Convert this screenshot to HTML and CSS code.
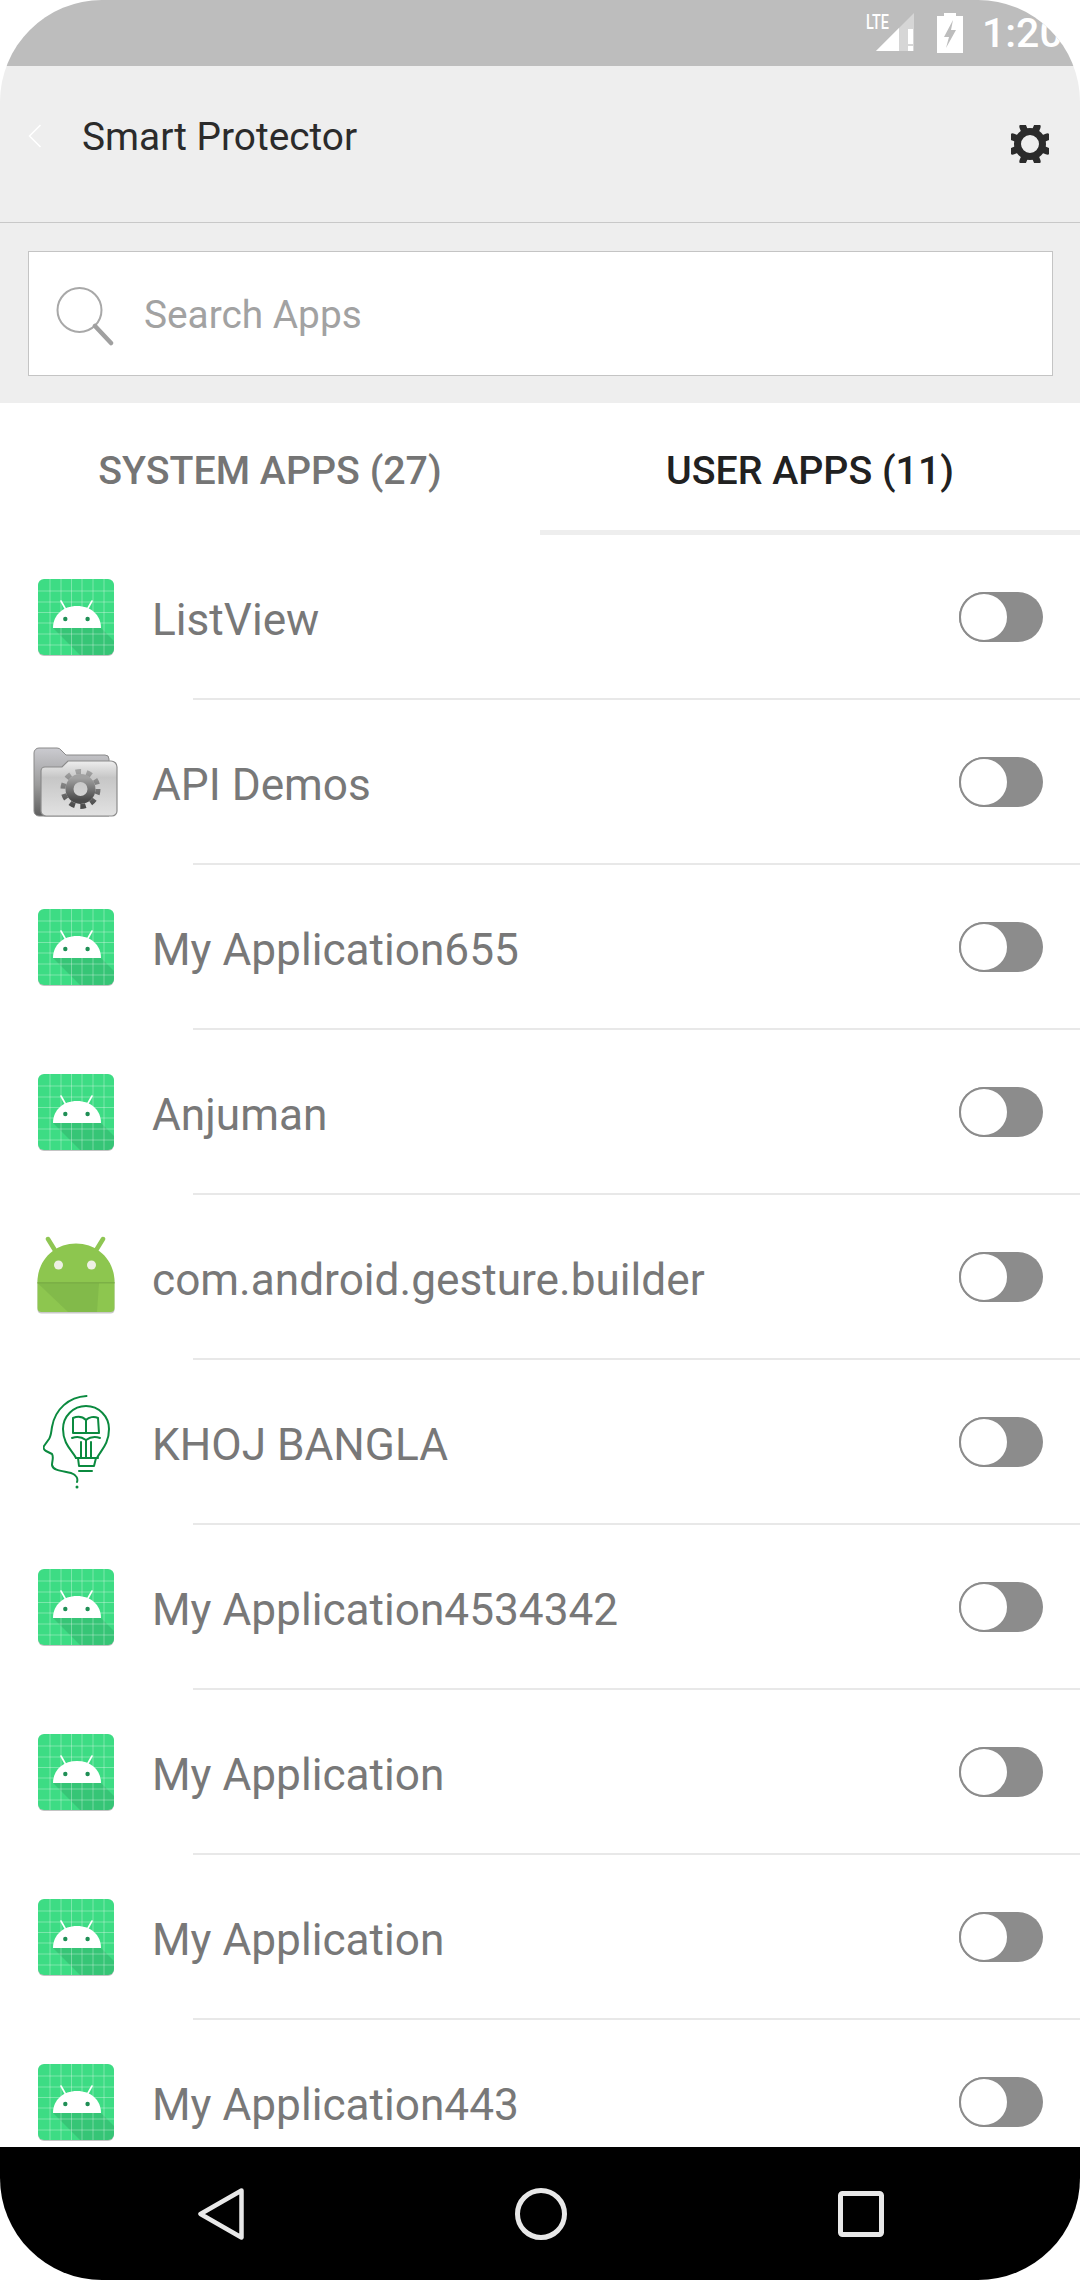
FILE: index.html
```html
<!DOCTYPE html>
<html lang="en">
<head>
<meta charset="utf-8">
<title>Smart Protector</title>
<link rel="stylesheet" href="styles.css">
</head>
<body>
<svg class="defs" width="0" height="0" aria-hidden="true">
  <defs>
    <linearGradient id="fold-front" x1="0" y1="0" x2="0" y2="1">
      <stop offset="0" stop-color="#eeeeee"/><stop offset=".3" stop-color="#c6c6c6"/><stop offset=".6" stop-color="#d2d2d2"/><stop offset="1" stop-color="#e2e2e2"/>
    </linearGradient>
    <linearGradient id="fold-back" x1="0" y1="0" x2="0" y2="1">
      <stop offset="0" stop-color="#cbcbd0"/><stop offset=".55" stop-color="#9a9a9a"/><stop offset="1" stop-color="#5f5f5f"/>
    </linearGradient>
    <linearGradient id="fold-gear" x1="0" y1="0" x2="0" y2="1">
      <stop offset="0" stop-color="#a2a2a2"/><stop offset="1" stop-color="#4a4a4a"/>
    </linearGradient>
    <symbol id="ic-app" viewBox="0 0 78 78">
      <rect x="0" y="1" width="76" height="76" rx="6" fill="#c4c4c4"/>
      <rect width="76" height="76" rx="6" fill="#3ddc84"/>
      <path d="M15 49 42 76H70a6 6 0 0 0 6-6V62L63 49Z" fill="#1e6b40" opacity=".2"/>
      <path d="M12 0V76M23 0V76M33.500 0V76M44 0V76M55 0V76M66 0V76M0 12H76M0 23H76M0 33.500H76M0 44H76M0 55H76M0 66H76" stroke="#fff" stroke-opacity=".32" stroke-width="1" fill="none"/>
      <path d="M15 49C15 36 25 27 39 27S63 36 63 49Z" fill="#fff"/>
      <path d="M23 22 27.500 30M54 22 49.500 30" stroke="#fff" stroke-width="1.600" stroke-linecap="round"/>
      <circle cx="27.300" cy="40" r="2.200" fill="#1f8f55"/><circle cx="49.600" cy="40" r="2.200" fill="#1f8f55"/>
    </symbol>
    <symbol id="ic-folder" viewBox="0 0 86 72">
      <path d="M1 6a5 5 0 0 1 5-5H24a5 5 0 0 1 4 2L33 8H72a4 4 0 0 1 4 4V69H6a5 5 0 0 1-5-5Z" fill="url(#fold-back)" stroke="#8a8a8a"/>
      <path d="M8 24a4 4 0 0 1 4-4H29L35 14H78a6 6 0 0 1 6 6V64a5 5 0 0 1-5 5H13a5 5 0 0 1-5-5Z" fill="url(#fold-front)" stroke="#8c8c8c" stroke-width="1.200"/>
      <circle cx="47.500" cy="42" r="11" fill="none" stroke="url(#fold-gear)" stroke-width="8"/>
      <circle cx="47.500" cy="42" r="17.500" fill="none" stroke="url(#fold-gear)" stroke-width="5" stroke-dasharray="5.500 5.500"/>
    </symbol>
    <symbol id="ic-robot" viewBox="0 0 78 80">
      <path d="M11 3 19 16M66 3 58 16" stroke="#8fc653" stroke-width="4.500" stroke-linecap="round"/>
      <path d="M1 46V72a4 4 0 0 0 4 4H74a4 4 0 0 0 4-4V46C78 24 61 8 39.500 8S1 24 1 46Z" fill="#c8c8c8" transform="translate(-.5 1.500)"/>
      <path d="M.5 46V72a4 4 0 0 0 4 4H73.500a4 4 0 0 0 4-4V46C77.500 24 60.500 7.500 39 7.500S.5 24 .5 46Z" fill="#8dc64f"/>
      <path d="M.5 46H77.500V47.500H.5Z" fill="#7cb046"/>
      <path d="M.5 47 31 76H60L62 47Z" fill="#74a844" opacity=".4"/>
      <circle cx="21.500" cy="29" r="4.500" fill="#eef0e4"/><circle cx="54.500" cy="29" r="4.500" fill="#eef0e4"/>
    </symbol>
    <symbol id="ic-khoj" viewBox="0 0 68 96">
      <g fill="none" stroke="#0b8a3f" stroke-width="2" stroke-linecap="round" stroke-linejoin="round">
        <path d="M43.500 1C26 2 12 14 9 32 8 38 8 41 6 44L1 51C0 53 1 55 3 56L9 59C11 62 9 66 9 70 10 76 20 76 28 78 34 80 35 84 34 87"/>
        <path d="M33 63C30 56 20 50 20 34A23 23 0 1 1 66 34C66 50 57 56 54 63"/>
        <path d="M33 63H55M35 63 36 71H51L53 63M36 76H49"/>
        <path d="M38 47V63M48 47V63M43 45V63"/>
        <path d="M30 23C35 21 40 22 43 25 46 22 51 21 55 23L56 38H30ZM43 25V38"/>
        <path d="M29 43C34 41 39 42 43 45 47 42 52 41 57 43"/>
      </g>
      <circle cx="34" cy="92" r="1.500" fill="#0b8a3f"/>
    </symbol>
    <symbol id="ic-gear" viewBox="0 0 38 38">
      <g fill="#2b2b2b">
        <path d="M15.500 .5a3.500 3.500 0 0 1 7 0V8h-7Z" transform="rotate(22.500 19 19)"/>
        <path d="M15.500 .5a3.500 3.500 0 0 1 7 0V8h-7Z" transform="rotate(67.500 19 19)"/>
        <path d="M15.500 .5a3.500 3.500 0 0 1 7 0V8h-7Z" transform="rotate(112.500 19 19)"/>
        <path d="M15.500 .5a3.500 3.500 0 0 1 7 0V8h-7Z" transform="rotate(157.500 19 19)"/>
        <path d="M15.500 .5a3.500 3.500 0 0 1 7 0V8h-7Z" transform="rotate(202.500 19 19)"/>
        <path d="M15.500 .5a3.500 3.500 0 0 1 7 0V8h-7Z" transform="rotate(247.500 19 19)"/>
        <path d="M15.500 .5a3.500 3.500 0 0 1 7 0V8h-7Z" transform="rotate(292.500 19 19)"/>
        <path d="M15.500 .5a3.500 3.500 0 0 1 7 0V8h-7Z" transform="rotate(337.500 19 19)"/>
      </g>
      <circle cx="19" cy="19" r="12.500" fill="none" stroke="#2b2b2b" stroke-width="7"/>
    </symbol>
  </defs>
</svg>

<div class="screen">
  <header class="status">
    <span class="lte">LTE</span>
    <svg class="signal" width="42" height="40" viewBox="0 0 42 40"><path d="M0 38 38 0V38Z" fill="#d6d6d6"/><path d="M0 38 23 15V38Z" fill="#fff"/><path d="M32 16h5V31H32ZM32 33h5v5H32Z" fill="#fff"/></svg>
    <svg class="battery" width="26" height="40" viewBox="0 0 26 40"><path d="M7 0H19V3H26V40H0V3H7Z" fill="#fff"/><path d="M16 7 7 24H12L9 35 19 17H14Z" fill="#bdbdbd"/></svg>
    <span class="time">1:20</span>
  </header>

  <div class="appbar">
    <svg class="back" width="14" height="24" viewBox="0 0 14 24"><path d="M12.500 1 1.500 12 12.500 23" fill="none" stroke="#fff" stroke-width="1.500"/></svg>
    <h1 class="title">Smart Protector</h1>
    <svg class="gear" width="38" height="38"><use href="#ic-gear"/></svg>
  </div>

  <div class="searchwrap">
    <div class="search">
      <svg class="search-ic" width="58" height="60" viewBox="0 0 58 60"><circle cx="23.500" cy="23" r="22" fill="none" stroke="#a8a8a8" stroke-width="2"/><path d="M39 39 55 56" stroke="#a0a0a0" stroke-width="4.500" stroke-linecap="round"/></svg>
      <span class="placeholder">Search Apps</span>
    </div>
  </div>

  <nav class="tabs">
    <div class="tab">SYSTEM APPS (27)</div>
    <div class="tab tab-on">USER APPS (11)</div>
  </nav>

  <main class="list">
    <div class="row"><div class="row-main"><span class="icon"><svg width="78" height="78"><use href="#ic-app"/></svg></span><span class="name">ListView</span><span class="toggle"></span></div><div class="rule"></div></div>
    <div class="row"><div class="row-main"><span class="icon"><svg class="folder" width="86" height="72"><use href="#ic-folder"/></svg></span><span class="name">API Demos</span><span class="toggle"></span></div><div class="rule"></div></div>
    <div class="row"><div class="row-main"><span class="icon"><svg width="78" height="78"><use href="#ic-app"/></svg></span><span class="name">My Application655</span><span class="toggle"></span></div><div class="rule"></div></div>
    <div class="row"><div class="row-main"><span class="icon"><svg width="78" height="78"><use href="#ic-app"/></svg></span><span class="name">Anjuman</span><span class="toggle"></span></div><div class="rule"></div></div>
    <div class="row"><div class="row-main"><span class="icon"><svg class="robot" width="78" height="80"><use href="#ic-robot"/></svg></span><span class="name">com.android.gesture.builder</span><span class="toggle"></span></div><div class="rule"></div></div>
    <div class="row"><div class="row-main"><span class="icon"><svg class="khoj" width="68" height="96"><use href="#ic-khoj"/></svg></span><span class="name">KHOJ BANGLA</span><span class="toggle"></span></div><div class="rule"></div></div>
    <div class="row"><div class="row-main"><span class="icon"><svg width="78" height="78"><use href="#ic-app"/></svg></span><span class="name">My Application4534342</span><span class="toggle"></span></div><div class="rule"></div></div>
    <div class="row"><div class="row-main"><span class="icon"><svg width="78" height="78"><use href="#ic-app"/></svg></span><span class="name">My Application</span><span class="toggle"></span></div><div class="rule"></div></div>
    <div class="row"><div class="row-main"><span class="icon"><svg width="78" height="78"><use href="#ic-app"/></svg></span><span class="name">My Application</span><span class="toggle"></span></div><div class="rule"></div></div>
    <div class="row"><div class="row-main"><span class="icon"><svg width="78" height="78"><use href="#ic-app"/></svg></span><span class="name">My Application443</span><span class="toggle"></span></div><div class="rule"></div></div>
  </main>

  <footer class="navbar">
    <svg width="46" height="52" viewBox="0 0 46 52"><path d="M43.500 2.500 2.500 26 43.500 49.500Z" fill="none" stroke="#e8e8e8" stroke-width="4.500" stroke-linejoin="round"/></svg>
    <svg width="52" height="52" viewBox="0 0 52 52"><circle cx="26" cy="26" r="23.500" fill="none" stroke="#e8e8e8" stroke-width="5"/></svg>
    <svg width="46" height="46" viewBox="0 0 46 46"><rect x="2.500" y="2.500" width="41" height="41" rx="2" fill="none" stroke="#e8e8e8" stroke-width="5"/></svg>
  </footer>
</div>
</body>
</html>
```
FILE: styles.css
```css
html, body {
  margin: 0;
  padding: 0;
  background: #fff;
}
.defs {
  display: block;
  height: 0;
}
.screen {
  width: 1080px;
  height: 2280px;
  border-radius: 102px;
  overflow: hidden;
  display: flex;
  flex-direction: column;
  background: #fff;
  font-family: Roboto, "Liberation Sans", sans-serif;
}
.status {
  height: 66px;
  flex: none;
  background: #bdbdbd;
  display: flex;
  align-items: center;
  color: #fff;
  padding-left: 866px;
  box-sizing: border-box;
}
.lte {
  font-size: 20px;
  font-weight: 500;
  line-height: 20px;
  width: 24px;
  margin-top: -22px;
  transform: scaleX(.72);
  transform-origin: left center;
  white-space: nowrap;
}
.signal {
  flex: none;
  margin-left: -14px;
}
.battery {
  flex: none;
  margin-left: 19px;
}
.time {
  font-size: 41px;
  font-weight: 500;
  margin-left: 19px;
  flex: none;
  line-height: 66px;
}
.appbar {
  height: 156px;
  flex: none;
  background: #eee;
  border-bottom: 1px solid #c8c8c8;
  display: flex;
  align-items: flex-start;
}
.back {
  margin: 58px 0 0 28px;
  flex: none;
}
.title {
  margin: 47px 0 0 40px;
  font-size: 38.800px;
  font-weight: 400;
  line-height: 48px;
  color: #2b2b2b;
  flex: 1;
}
.gear {
  margin: 59px 31px 0 0;
  flex: none;
}
.searchwrap {
  flex: none;
  background: #eee;
  padding: 28px 27px 27px 28px;
}
.search {
  height: 123px;
  background: #fff;
  border: 1px solid #c4c4c4;
  display: flex;
  align-items: center;
}
.search-ic {
  margin: 6px 0 0 27px;
  flex: none;
}
.placeholder {
  margin-left: 30px;
  margin-top: 2px;
  font-size: 38.800px;
  color: #a2a2a2;
}
.tabs {
  flex: none;
  height: 132px;
  display: flex;
}
.tab {
  flex: 1;
  box-sizing: border-box;
  text-align: center;
  font-size: 39.300px;
  font-weight: 500;
  line-height: 136px;
  color: #757575;
  height: 132px;
}
.tab-on {
  color: #212121;
  border-bottom: 5px solid #eee;
}
.list {
  flex: 1;
  min-height: 0;
  overflow: hidden;
}
.row-main {
  height: 163px;
  display: flex;
  align-items: center;
}
.rule {
  height: 2px;
  margin-left: 193px;
  background: #e8e8e8;
}
.icon {
  width: 152px;
  padding-left: 38px;
  box-sizing: border-box;
  flex: none;
  display: flex;
  align-items: center;
  margin-top: 3px;
}
.folder {
  margin-left: -5px;
  margin-top: -1px;
}
.robot {
  margin-left: -1px;
  margin-top: -4px;
}
.khoj {
  margin-left: 5px;
  margin-top: -1px;
}
.name {
  flex: 1;
  font-size: 44.200px;
  line-height: 60px;
  color: #787878;
  margin-top: 6px;
}
.toggle {
  width: 84px;
  height: 50px;
  border-radius: 25px;
  background: #8c8c8c;
  margin: 0 37px 0 0;
  flex: none;
  display: flex;
}
.toggle::before {
  content: "";
  width: 46px;
  height: 46px;
  border-radius: 50%;
  background: #fff;
  border: 2px solid #8c8c8c;
  flex: none;
}
.navbar {
  flex: none;
  height: 133px;
  background: #000;
  display: flex;
  align-items: center;
  padding-left: 198px;
}
.navbar svg:nth-child(2) {
  margin-left: 271px;
}
.navbar svg:nth-child(3) {
  margin-left: 271px;
}
```
